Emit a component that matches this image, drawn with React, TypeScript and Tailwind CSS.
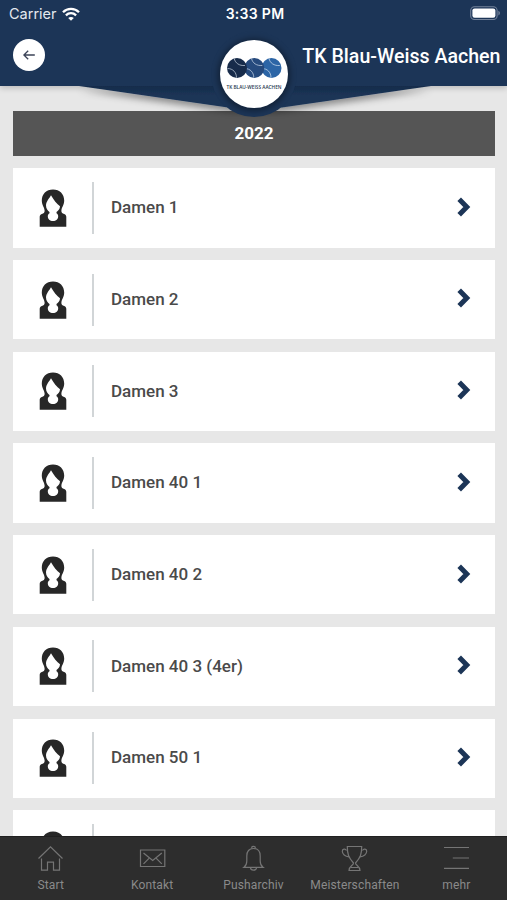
import React from 'react';

const TEAMS = [
    'Damen 1',
    'Damen 2',
    'Damen 3',
    'Damen 40 1',
    'Damen 40 2',
    'Damen 40 3 (4er)',
    'Damen 50 1',
    '',
];

const WifiIcon: React.FC = () => (
    <svg viewBox="0 0 18 14" className="w-[18px] h-[14px]" fill="none" stroke="white" strokeWidth="2.3">
        <path d="M1 5.2C5.4.7 12.6.7 17 5.2" />
        <path d="M3.9 8.3c2.9-2.8 7.3-2.8 10.2 0" />
        <path d="M6.2 11.1c1.6-1.6 4-1.6 5.6 0L9 13.8z" fill="white" stroke="none" />
    </svg>
);

const BatteryIcon: React.FC = () => (
    <svg viewBox="0 0 31 15" className="w-[31px] h-[15px]">
        <rect x="0.7" y="0.7" width="26.4" height="12.8" rx="3.8" fill="none" stroke="#73829a" strokeWidth="1.1" />
        <rect x="2.4" y="2.4" width="23" height="9.4" rx="2.2" fill="white" />
        <path d="M28.4 4.8c2 .8 2 3.8 0 4.6z" fill="#73829a" />
    </svg>
);

const BackIcon: React.FC = () => (
    <svg viewBox="0 0 12 10" className="w-3 h-2.5" fill="none" stroke="#3b4357" strokeWidth="1.3">
        <path d="M11.8 5H1M5.2.7.9 5l4.3 4.3" />
    </svg>
);

const ClubLogo: React.FC = () => (
    <svg viewBox="0 0 68 68" className="w-[68px] h-[68px] overflow-visible">
        <circle cx="34" cy="34" r="34" fill="white" />
        <circle cx="51.5" cy="28" r="10" fill="#2c65a6" />
        <path d="M42 28.5c5.5 0 9 4 9 9.2M49 18.5c1 4.5 5 7.5 10.8 7" fill="none" stroke="#c5d7ea" strokeWidth="0.8" />
        <circle cx="34.3" cy="28" r="10" fill="#264a7d" />
        <path d="M24.8 28.5c5.5 0 9 4 9 9.2M31.5 18.5c1 4.5 5 7.5 10.8 7" fill="none" stroke="#bccbe0" strokeWidth="0.8" />
        <circle cx="17" cy="28" r="10" fill="#172b4a" />
        <path d="M7.5 28.5c5.5 0 9 4 9 9.2M14.2 18.5c1 4.5 5 7.5 10.8 7" fill="none" stroke="#b5c1d0" strokeWidth="0.8" />
        <text
            x="34"
            y="49"
            textAnchor="middle"
            textLength="55"
            lengthAdjust="spacingAndGlyphs"
            fill="#27364e"
            className="font-['Open_Sans',sans-serif] text-[5.8px] font-semibold"
        >
            TK BLAU-WEISS AACHEN
        </text>
    </svg>
);

// Flap and round badge that hang from the header over the list
const HeaderBadge: React.FC = () => (
    <>
        <div className="absolute inset-x-0 top-[86px] h-[40px]">
            <svg viewBox="0 0 507 40" className="w-full h-full">
                <defs>
                    <filter id="flapShadow" x="-10%" y="-50%" width="120%" height="250%">
                        <feDropShadow dx="0" dy="4" stdDeviation="3.5" floodColor="#000" floodOpacity="0.4" />
                    </filter>
                    <linearGradient id="flap" x1="0" y1="0" x2="0" y2="1">
                        <stop offset="0" stopColor="#162c4b" />
                        <stop offset="0.5" stopColor="#1c3557" />
                    </linearGradient>
                </defs>
                <path d="M79 0 228 21.5h54L431 0z" fill="url(#flap)" filter="url(#flapShadow)" />
            </svg>
        </div>
        <div className="absolute left-[211px] top-[31px] w-[86px] h-[86px] rounded-full bg-[#1c3557] flex items-center justify-center">
            <div className="rounded-full shadow-[0_1px_6px_2px_rgba(0,0,0,0.4)]">
                <ClubLogo />
            </div>
        </div>
    </>
);

const Header: React.FC = () => (
    <header className="relative z-10 h-[86px] shrink-0 bg-[#1c3557] text-white">
        <div className="absolute inset-0 shadow-[0_2px_6px_rgba(0,0,0,0.2)]" />
        <HeaderBadge />
        <div className="relative h-[28px] flex items-center justify-between pl-[9px] pr-[6px] font-['Inter',sans-serif]">
            <div className="flex flex-1 items-center gap-[5px] pb-px text-[14.5px] text-[#e4e9ef]">
                <span>Carrier</span>
                <WifiIcon />
            </div>
            <span className="pb-px text-[14px] font-semibold tracking-[0.3px]">3:33 PM</span>
            <div className="flex flex-1 justify-end pb-px">
                <BatteryIcon />
            </div>
        </div>
        <div className="relative h-[54px] flex items-center justify-between pl-[13px] pr-[6.5px]">
            <button className="w-8 h-8 rounded-full bg-white flex items-center justify-center">
                <BackIcon />
            </button>
            <h1 className="pt-[4px] text-[19.6px] font-medium whitespace-nowrap">TK Blau-Weiss Aachen</h1>
        </div>
    </header>
);

const WomanIcon: React.FC = () => (
    <svg viewBox="0 0 28 38" className="w-[28px] h-[38px]">
        <path
            d="M14 .5C7.3.5 2.8 5 2.8 11.5c0 4.500 2.500 6.500 2.800 10 .2 2-.8 2.900-2.800 3.500C1.300 25.500.7 26.500.7 28v9.700h26.600V28c0-1.500-.6-2.500-2.100-3-2-.6-3-1.500-2.800-3.500.3-3.500 2.800-5.500 2.800-10C25.200 5 20.700.5 14 .5z"
            fill="#272727"
        />
        <path
            d="M12 6.200c-1.300 2.800-5 6-5 10.300 0 3.300 2 5.500 3.500 6.500v1.200c-1 .7-1.700 1.700-1.700 3 0 2.800 2.100 4.800 5.200 4.800s5.200-2 5.200-4.800c0-1.300-.7-2.300-1.700-3V23c1.500-1 3.500-3 3.500-5.700-3-2.300-6.500-6.600-9-11.100z"
            fill="white"
        />
    </svg>
);

const ChevronIcon: React.FC = () => (
    <svg viewBox="0 0 14 20" className="w-[14px] h-[20px]" fill="none" stroke="#1c3557" strokeWidth="5">
        <path d="M2.2 2.2 9.8 10l-7.6 7.8" />
    </svg>
);

const TeamRow: React.FC<{ name: string }> = ({ name }) => (
    <li className="h-[79.3px] shrink-0 bg-white flex items-center pl-[26px] pr-[24px]">
        <WomanIcon />
        <div className="ml-[24.5px] w-[2px] h-[52px] bg-[#d1d5d7]" />
        <span className="ml-[17.5px] flex-1 text-[17px] font-medium text-[#4a4a4a]">{name}</span>
        <div className="pb-[2.5px]">
            <ChevronIcon />
        </div>
    </li>
);

const TABS = [
    {
        label: 'Start',
        icon: <path d="M1.5 13.5 13.5 1.8l12 11.7M4.5 13.5v11.7h6v-8h6v8h6V13.5" />,
    },
    {
        label: 'Kontakt',
        icon: (
            <>
                <path d="M1.5 5h24.300v16.500H1.500z" />
                <path d="m4.500 8 9.200 7.500L22.800 8M4.500 18.800l5.500-5.500M22.800 18.800l-5.500-5.500" />
            </>
        ),
    },
    {
        label: 'Pusharchiv',
        icon: (
            <>
                <path d="M4 22.300c2.200-1.500 2.800-3.500 2.800-6.300v-5C6.800 6.500 9 3.500 13.500 3.500s6.700 3 6.700 7.500v5c0 2.800.6 4.800 2.800 6.300z" />
                <path d="M11.800 3.600V2.300c0-1.200 3.400-1.200 3.400 0v1.300M10.500 22.500c0 3.600 6 3.600 6 0" />
            </>
        ),
    },
    {
        label: 'Meisterschaften',
        icon: (
            <>
                <path d="M6.300 1.500h14.400c0 7.500-1.200 11-6.200 16.500 0 2.500 4.500 3 4.500 7.500H8c0-4.500 4.500-5 4.500-7.500C7.500 12.500 6.300 9 6.300 1.500z" />
                <path d="M8 11.800C4 11.500 1.300 9 1.300 6.300c0-2.500 3.200-2.800 4.200-.8M19 11.800c4-.3 6.700-2.800 6.700-5.500 0-2.500-3.200-2.800-4.200-.8M9.500 22.500h8" />
            </>
        ),
    },
    {
        label: 'mehr',
        icon: <path d="M1 2.500h25M9.800 13h16.200M1 23.300h25" />,
    },
];

const TabBar: React.FC = () => (
    <nav className="relative z-10 h-[64px] shrink-0 grid grid-cols-5 bg-[#2d2d2d] border-t border-[#202020]">
        {TABS.map((tab) => (
            <div key={tab.label} className="flex flex-col items-center pt-[8px] text-[#8a8a8a]">
                <svg viewBox="0 0 27 27" className="w-[27px] h-[27px]" fill="none" stroke="#757575" strokeWidth="1.2">
                    {tab.icon}
                </svg>
                <span className="mt-[4px] text-[12px] leading-[18px] tracking-[0.15px]">{tab.label}</span>
            </div>
        ))}
    </nav>
);

const App: React.FC = () => {
    return (
        <div className="w-[507px] h-[900px] flex flex-col overflow-hidden bg-[#e7e7e7] font-['Roboto',sans-serif]">
            <Header />
            <main className="flex-1 min-h-0 overflow-hidden pl-[13px] pr-[12px] pt-[25px]">
                <h2 className="h-[45px] bg-[#555] flex items-center justify-center text-[17px] font-bold text-white">
                    2022
                </h2>
                <ul className="mt-[12.4px] flex flex-col gap-[12.4px]">
                    {TEAMS.map((name, index) => (
                        <TeamRow key={index} name={name} />
                    ))}
                </ul>
            </main>
            <TabBar />
        </div>
    );
};

export default App;
